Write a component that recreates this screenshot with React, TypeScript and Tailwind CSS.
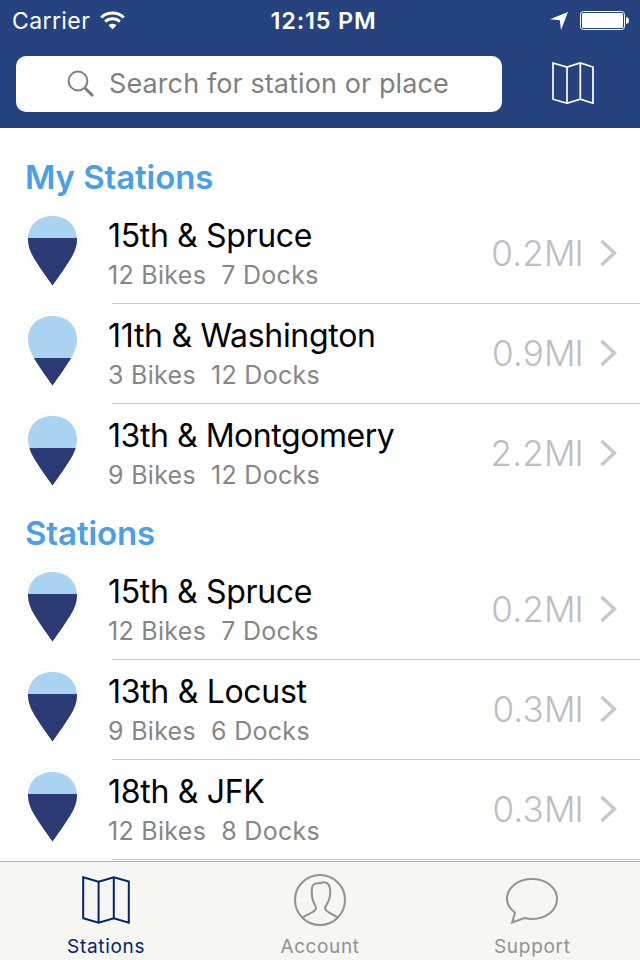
import React from 'react';

type Station = {
  name: string;
  bikes: number;
  docks: number;
  distance: string;
  level: number;
  tracking: string;
};

const myStations: Station[] = [
  { name: "15th & Spruce", bikes: 12, docks: 7, distance: "0.2", level: 24, tracking: "tracking-[-0.35px]" },
  { name: "11th & Washington", bikes: 3, docks: 12, distance: "0.9", level: 44, tracking: "tracking-[-0.3px]" },
  { name: "13th & Montgomery", bikes: 9, docks: 12, distance: "2.2", level: 34, tracking: "tracking-[-0.45px]" }
];

const stations: Station[] = [
  { name: "15th & Spruce", bikes: 12, docks: 7, distance: "0.2", level: 24, tracking: "tracking-[-0.35px]" },
  { name: "13th & Locust", bikes: 9, docks: 6, distance: "0.3", level: 24, tracking: "tracking-[-0.3px]" },
  { name: "18th & JFK", bikes: 12, docks: 8, distance: "0.3", level: 24, tracking: "tracking-[-0.3px]" }
];

const pinPath = "M28.5 4C43 4 53 13.5 53 27.5C53 34 50.5 40.5 46.5 47C41 56 34.5 65 28.5 73.5C22.5 65 16 56 10.5 47C6.5 40.5 4 34 4 27.5C4 13.5 14 4 28.5 4Z";

const Pin = ({ level, id }: { level: number; id: string }) => (
  <svg width="57" height="82" viewBox="0 0 57 82" className="block shrink-0">
    <path
      d="M28.5 0.3C45 0.3 56.5 11 56.5 27.5C56.5 35 54 42 50 49C44 59 35.5 70 28.5 80C21.5 70 13 59 7 49C3 42 0.5 35 0.5 27.5C0.5 11 12 0.3 28.5 0.3Z"
      fill="#fff"
      stroke="#edf3f9"
      strokeWidth="0.5"
    />
    <clipPath id={id}>
      <path d={pinPath} />
    </clipPath>
    <g clipPath={`url(#${id})`}>
      <rect width="57" height="82" fill="#aad3f2" />
      <rect y={level + 2} width="57" height="60" fill="#2b3a75" />
    </g>
  </svg>
);

const MapIcon = ({ size, stroke }: { size: number; stroke: number }) => (
  <svg width={size} height={size} viewBox={`0 0 ${size} ${size}`} fill="none" stroke="currentColor" strokeWidth={stroke} className="block">
    <path
      d={
        size === 42
          ? "M1 1L15 5L28.3 1L41 5V41.2L28.3 37.2L15 41.2L1 37.2ZM15 5V41.2M28.3 1V37.2"
          : "M1.2 1.3L16.6 5.6L31.8 1.3L46.8 5.6V46.6L31.8 42.3L16.6 46.6L1.2 42.3ZM16.6 5.6V46.6M31.8 1.3V42.3"
      }
    />
  </svg>
);

const StationRow = ({ station, id, last }: { station: Station; id: string; last: boolean }) => (
  <li className="flex h-[100px] pl-6">
    <div className="w-[88px] pt-2">
      <Pin level={station.level} id={id} />
    </div>
    <div className={`flex flex-1 items-start justify-between ${last ? "" : "border-b border-[#c8c7cc]"}`}>
      <div className="-ml-1 pt-[13px]">
        <h3 className={`text-[32px] leading-[38px] text-black ${station.tracking}`}>{station.name}</h3>
        <p className="mt-1 flex gap-[15px] text-[25px] leading-[32px] tracking-[0.3px] text-[#868686]">
          <span>{station.bikes} Bikes</span>
          <span>{station.docks} Docks</span>
        </p>
      </div>
      <div className="flex items-center pt-[26px] pr-[23px] text-[#bdbdc3]">
        <span className="text-[35px] leading-[46px] font-[350] tracking-[0.2px]">{station.distance}</span>
        <span className="text-[35px] leading-[46px] font-light tracking-[-0.8px]">MI</span>
        <svg width="17" height="28" viewBox="0 0 17 28" fill="none" className="ml-[17px]">
          <path d="M1.5 2L14.5 14L1.5 26" stroke="#c7c7cc" strokeWidth="3.5" />
        </svg>
      </div>
    </div>
  </li>
);

const StationSection = ({ title, items, id, last }: { title: string; items: Station[]; id: string; last?: boolean }) => (
  <section>
    <h2 className="flex h-14 items-center pt-[2px] pl-[25px] text-[33px] leading-[40px] font-semibold tracking-[-0.1px] text-[#4a9fe8]">{title}</h2>
    <ul>
      {items.map((station, index) => (
        <StationRow key={index} station={station} id={`${id}-${index}`} last={!last && index === items.length - 1} />
      ))}
    </ul>
  </section>
);

const App: React.FC = () => {
  return (
    <div className="flex h-[960px] w-[640px] flex-col overflow-hidden bg-white font-['Inter','Liberation_Sans',sans-serif]">
      {/* Status bar and search */}
      <header className="h-32 shrink-0 bg-[#26437f] text-white">
        <div className="grid h-10 grid-cols-3 items-center pt-px pr-[11px] pl-3">
          <div className="flex items-center gap-[10px]">
            <span className="text-[23px] leading-[28px] tracking-[0.4px]">Carrier</span>
            <svg width="25" height="19" viewBox="0 0 25 19" fill="none" stroke="#fff" strokeWidth="3">
              <path d="M1.2 6.5C7.5 0.4 17.5 0.4 23.8 6.5" />
              <path d="M5.2 10.6C9.3 6.8 15.7 6.8 19.8 10.6" />
              <path d="M12.5 18.2L8.5 14.2C10.8 12.2 14.2 12.2 16.5 14.2Z" fill="#fff" stroke="none" />
            </svg>
          </div>
          <span className="pl-[6px] text-center text-[23.5px] leading-[28px] font-semibold tracking-[0.8px] whitespace-nowrap">12:15 PM</span>
          <div className="flex items-center justify-end gap-3">
            <svg width="18" height="18" viewBox="0 0 18 18" fill="#fff">
              <path d="M18 0L11 18L9.8 8.3L0 7.3Z" />
            </svg>
            <svg width="49" height="19" viewBox="0 0 49 19">
              <rect x="0.5" y="0.5" width="44" height="18" rx="3" fill="none" stroke="#fff" />
              <rect x="2" y="2" width="41" height="15" rx="1.5" fill="#fff" />
              <path d="M46 6C48 6.3 49 7.4 49 9.5C49 11.6 48 12.7 46 13Z" fill="#fff" />
            </svg>
          </div>
        </div>
        <div className="flex pt-4 pl-4">
          <div className="flex h-14 w-[486px] items-center rounded-[10px] bg-white pl-[51px] text-[#7f7f7f]">
            <svg width="28" height="28" viewBox="0 0 28 28" fill="none" stroke="currentColor">
              <circle cx="11" cy="11" r="9.4" strokeWidth="2" />
              <path d="M17.7 17.7L26 26" strokeWidth="3" />
            </svg>
            <span className="ml-[14px] text-[27px] leading-[34px] tracking-[0.1px] whitespace-nowrap">Search for station or place</span>
          </div>
          <div className="mt-[6px] ml-[50px]">
            <MapIcon size={42} stroke={1.7} />
          </div>
        </div>
      </header>

      {/* Station list */}
      <main className="min-h-0 flex-1 overflow-hidden pt-5">
        <StationSection title="My Stations" items={myStations} id="mine" />
        <StationSection title="Stations" items={stations} id="all" last />
      </main>

      {/* Tab bar */}
      <nav className="grid h-[99px] shrink-0 grid-cols-3 border-t border-[#b2b2b2] bg-[#f6f6f3] text-[19px] leading-6 text-[#929292]">
        <div className="flex flex-col items-center pr-px text-[#02246c]">
          <div className="mt-[14px] flex h-[48px] items-center">
            <MapIcon size={48} stroke={2} />
          </div>
          <span className="mt-[11px] tracking-[0.7px]">Stations</span>
        </div>
        <div className="flex flex-col items-center">
          <svg width="52" height="52" viewBox="0 0 52 52" fill="none" stroke="currentColor" strokeWidth="2" className="mt-3 shrink-0">
            <circle cx="26" cy="26" r="25" />
            <path d="M8.7 43.5C13.5 39.5 22 38.5 22 34C22 31.5 17.7 28.5 17.7 18C17.7 11 19.5 9.2 24.5 9.2C27.5 9.2 27.5 8.3 30 8.3C34.5 8.3 36.3 11.5 36.3 18C36.3 28.5 31 31.5 31 34C31 38.5 39 39.5 43.5 43.5" />
          </svg>
          <span className="mt-[9px] tracking-[0.6px]">Account</span>
        </div>
        <div className="flex flex-col items-center pr-[2px]">
          <svg width="52" height="46" viewBox="0 0 52 46" fill="none" stroke="currentColor" strokeWidth="2" className="mt-4 shrink-0">
            <path d="M9 34.5C4 31 1 26.5 1 20.8C1 9.5 12 1 26 1C40 1 51 9.5 51 20.8C51 32.5 40 41 26 41C23 41 21 40.7 18.5 40L6.2 44.5Z" />
          </svg>
          <span className="mt-[11px] tracking-[0.7px]">Support</span>
        </div>
      </nav>
    </div>
  );
};

export default App;
